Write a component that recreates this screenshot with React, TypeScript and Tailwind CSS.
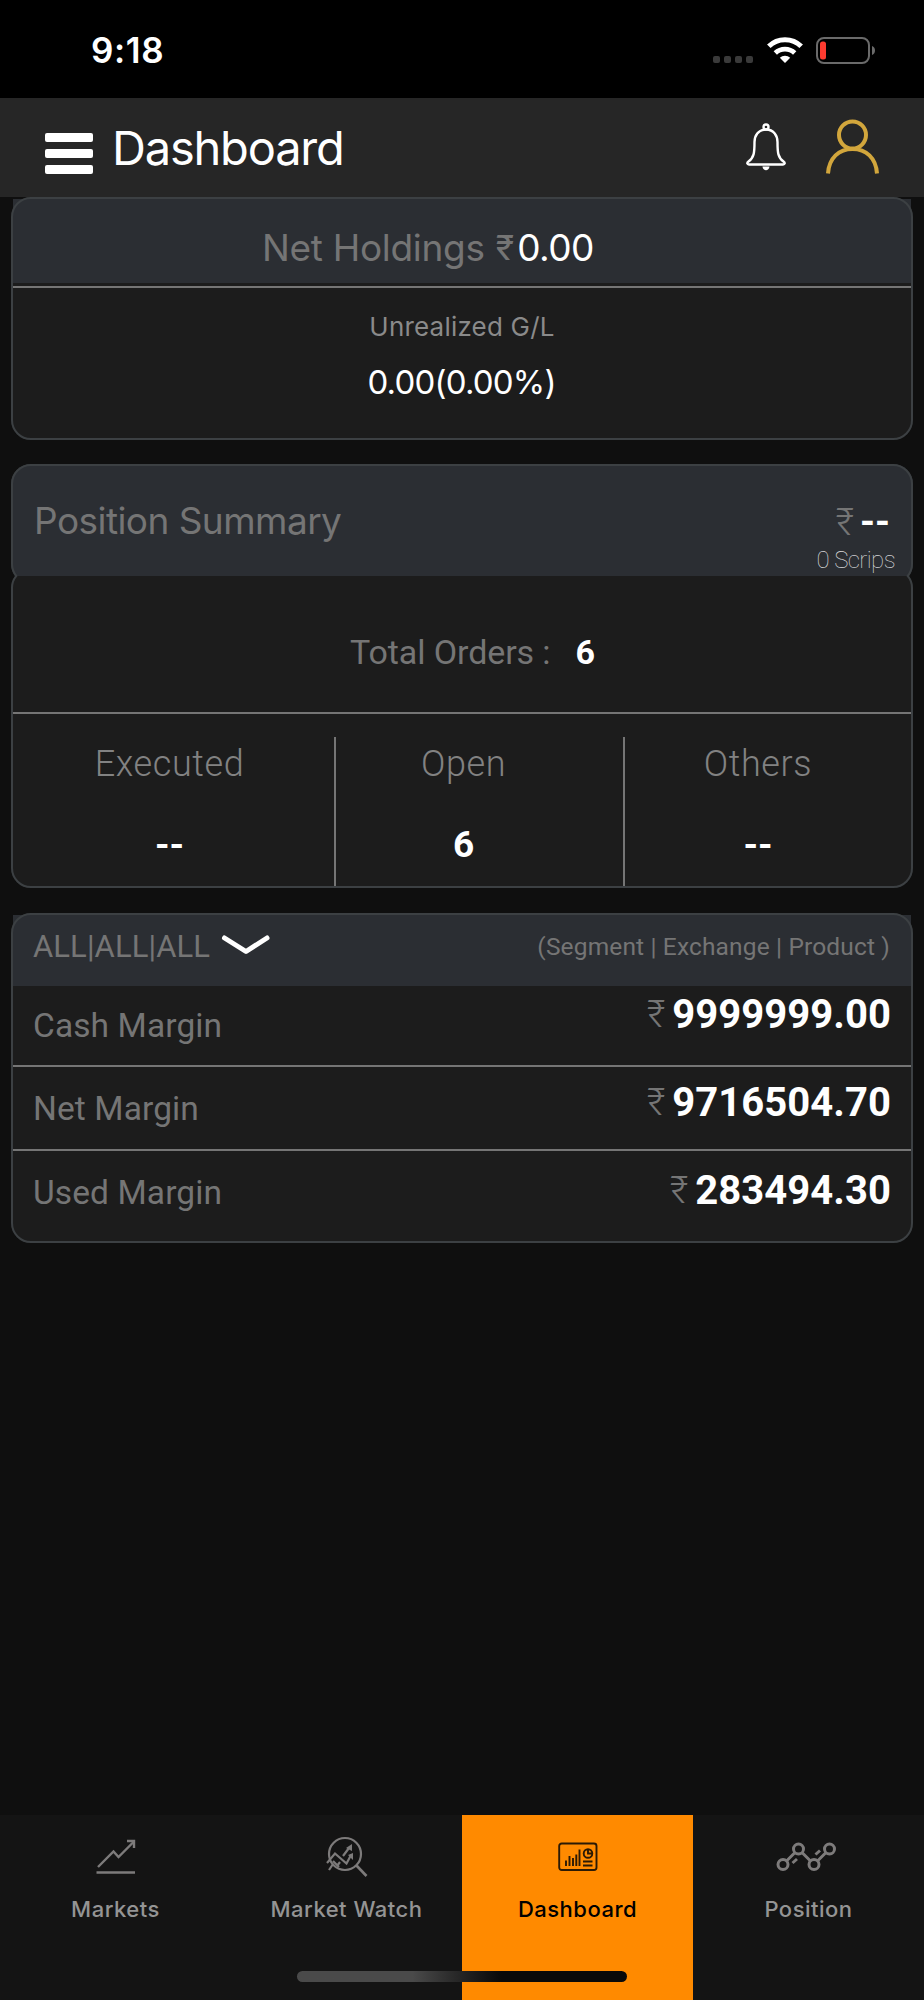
import React from "react";

type MarginRow = {
    label: string;
    amount: string;
};

type OrderStat = {
    label: string;
    value: string;
};

type NavItemType = {
    label: string;
    icon: React.ReactNode;
    active?: boolean;
};

const margins: MarginRow[] = [
    { label: "Cash Margin", amount: "9999999.00" },
    { label: "Net Margin", amount: "9716504.70" },
    { label: "Used Margin", amount: "283494.30" },
];

const MarketsIcon = () => (
    <svg width="40" height="36" viewBox="0 0 40 36" fill="none" stroke="#7d7b7b" strokeWidth="2.400">
        <path d="M2 28 17.5 12.5 22.5 18 37.5 3" />
        <path d="M31 2H38V9" />
        <path d="M0.500 33.500H39" />
    </svg>
);

const MarketWatchIcon = () => (
    <svg width="42" height="42" viewBox="0 0 42 42" fill="none" stroke="#7d7b7b" strokeWidth="2.200">
        <circle cx="19" cy="18" r="16" />
        <path d="M30 29 40.500 40" strokeWidth="2.600" />
        <path d="M1 27 9 17.500 20.500 27.500 24.500 20" />
        <path d="M3 34 7 28M7 25 13 31M11 30 14 26M17 20 23 12" />
        <path d="M20 12 26 8V15ZM22 19 27 17 27 24Z" fill="#7d7b7b" stroke="none" />
    </svg>
);

const DashboardIcon = () => (
    <svg width="40" height="30" viewBox="0 0 40 30" fill="none" stroke="#2b1a05" strokeWidth="1.900">
        <rect x="1.200" y="1.500" width="37.300" height="26.500" rx="2.500" />
        <path d="M8 18.500V24M11.500 14V24M15 16V24M18.300 12.500V24M21.500 7.500V24" />
        <circle cx="30" cy="11.500" r="4.300" />
        <path d="M30 7V11.500H34.500M25 19.500H34.500M25 23.500H34.500" />
    </svg>
);

const PositionIcon = () => (
    <svg className="mr-[5px]" width="60" height="30" viewBox="0 0 60 30" fill="none" stroke="#7d7b7b" strokeWidth="3">
        <circle cx="7" cy="22.500" r="5" />
        <circle cx="22.500" cy="7" r="5" />
        <circle cx="38" cy="22.500" r="5" />
        <circle cx="53.500" cy="7" r="5" />
        <path d="M10.500 19 19 10.500M26 10.500 34.500 19M41.500 19 50 10.500" />
        <path d="M16.500 21 21 17M39.500 12.500 44 8.500" />
    </svg>
);

const navItems: NavItemType[] = [
    { label: "Markets", icon: <MarketsIcon /> },
    { label: "Market Watch", icon: <MarketWatchIcon /> },
    { label: "Dashboard", icon: <DashboardIcon />, active: true },
    { label: "Position", icon: <PositionIcon /> },
];

const StatusBar = () => (
    <div className="h-[98px] bg-black flex justify-between items-start pl-[91px] pr-[48px]">
        <p className="pt-[33px] text-[35px] leading-none font-semibold tracking-[0.6px] text-white">9:18</p>
        <div className="flex items-start pt-[36px]">
            <div className="flex gap-[4px] mt-[20px] mr-[14px]">
                <span className="w-[7px] h-[7px] rounded-[2px] bg-[#3a3a3a]" />
                <span className="w-[7px] h-[7px] rounded-[2px] bg-[#3a3a3a]" />
                <span className="w-[7px] h-[7px] rounded-[2px] bg-[#3a3a3a]" />
                <span className="w-[7px] h-[7px] rounded-[2px] bg-[#3a3a3a]" />
            </div>
            <svg width="36" height="27" viewBox="0 0 36 27" fill="none" stroke="#fff">
                <path d="M1.800 10.300A23 23 0 0 1 34.200 10.300" strokeWidth="5" />
                <path d="M8.300 17A14 14 0 0 1 27.700 17" strokeWidth="4.800" />
                <path d="M18 27 12.800 21.800A7.500 7.500 0 0 1 23.200 21.800Z" fill="#fff" stroke="none" />
            </svg>
            <svg className="ml-[13px]" width="60" height="29" viewBox="0 0 60 29" fill="none">
                <rect x="1" y="2" width="52" height="25" rx="7" stroke="#6a6a6a" strokeWidth="2" />
                <rect x="4" y="5.500" width="6" height="18" rx="2.500" fill="#fe3b30" />
                <path d="M56 10C60 11.500 60 17.500 56 19Z" fill="#6a6a6a" />
            </svg>
        </div>
    </div>
);

const Header = () => (
    <div className="h-[99px] bg-[#262626] flex items-start pl-[45px] pr-[44px]">
        <button className="mt-[35px] flex flex-col gap-[7px]">
            <span className="block w-[48px] h-[9px] rounded-[2px] bg-white" />
            <span className="block w-[48px] h-[9px] rounded-[2px] bg-white" />
            <span className="block w-[48px] h-[9px] rounded-[2px] bg-white" />
        </button>
        <h1 className="mt-[26px] ml-[19px] text-[47px] leading-none tracking-[-1.2px] text-white">Dashboard</h1>
        <div className="ml-auto flex items-start">
            <svg className="mt-[25px]" width="42" height="49" viewBox="0 0 42 49" fill="none" stroke="#fff" strokeWidth="2.400">
                <circle cx="21" cy="4" r="2.500" />
                <path d="M21 6.500C13 6.500 9.500 13 9.500 19C9.500 30 9 34.500 3.500 38.500C1.500 40 2.200 41.500 4 41.500H38C39.800 41.500 40.500 40 38.500 38.500C33 34.500 32.500 30 32.500 19C32.500 13 29 6.500 21 6.500Z" />
                <path d="M17.500 43.500H24.500C24 48.500 18 48.500 17.500 43.500Z" fill="#fff" stroke="none" />
            </svg>
            <svg className="mt-[21px] ml-[37px]" width="56" height="56" viewBox="0 0 56 56" fill="none" stroke="#d2a63c" strokeWidth="4">
                <circle cx="28.500" cy="16" r="13.500" />
                <path d="M4 54.500C5 39 15 30 28.500 30C42 30 52 39 53 54.500" />
            </svg>
        </div>
    </div>
);

// the outline is painted over the square-cornered card header
const Card: React.FC<{ className: string; children: React.ReactNode }> = (props) => (
    <div
        className={`relative rounded-[20px] bg-[#1c1c1c] after:absolute after:inset-0 after:rounded-[20px] after:border-2 after:border-[#3c4043] after:pointer-events-none ${props.className}`}
    >
        {props.children}
    </div>
);

const HoldingsCard = () => (
    <Card className="h-[243px] p-[2px]">
        <div className="h-[84px] bg-[#2b2e33] flex pt-[30px] pl-[249px] text-[37px] leading-none">
            <span className="text-[#757575] whitespace-pre tracking-[-0.3px]">Net Holdings </span>
            <span className="ml-[1px] text-[#757575] text-[34px] leading-[38px]">₹</span>
            <span className="ml-[3px] text-white tracking-[-0.6px]">0.00</span>
        </div>
        <div className="mt-[3px] h-[2px] bg-[#757575]" />
        <div className="flex flex-col items-center">
            <p className="mt-[26px] text-[26px] leading-none tracking-[0.2px] text-[#8a8a8a]">Unrealized G/L</p>
            <p className="mt-[26px] mr-[1px] text-[33px] leading-none tracking-[-0.8px] text-white">0.00(0.00%)</p>
        </div>
    </Card>
);

const OrderColumn: React.FC<{ stat: OrderStat; className: string }> = ({ stat, className }) => (
    <div className={`flex flex-col items-center text-center ${className}`}>
        <p className="mt-[9px] text-[36px] leading-none font-light tracking-[0.6px] text-[#828282]">{stat.label}</p>
        <p className="mt-[44px] text-[37px] leading-none font-bold text-white">{stat.value}</p>
    </div>
);

const PositionCard = () => (
    <div>
        <div className="h-[112px] overflow-hidden">
            <Card className="h-[120px] bg-[#2b2e33]! flex justify-between">
                <p className="mt-[38px] ml-[23px] text-[37px] leading-none tracking-[-0.55px] text-[#757575]">Position Summary</p>
                <div className="flex flex-col items-end font-[Roboto]">
                    <p className="mt-[39px] mr-[23px] flex gap-[6px] text-[38px] leading-none">
                        <span className="font-light text-[#757575]">₹</span>
                        <span className="font-bold text-white">--</span>
                    </p>
                    <p className="mt-[7px] mr-[18px] text-[24px] leading-none font-thin tracking-[-0.6px] text-[#d8d9db]">0 Scrips</p>
                </div>
            </Card>
        </div>
        <div className="h-[312px] overflow-hidden font-[Roboto]">
            <Card className="-mt-[8px] h-[320px] px-[2px] pt-[67px]">
                <div className="flex pl-[337px] text-[34px] leading-none">
                    <span className="tracking-[-0.1px] text-[#757575]">Total Orders :</span>
                    <span className="ml-[25px] font-bold text-white">6</span>
                </div>
                <div className="mt-[43px] h-[2px] bg-[#757575]" />
                <div className="mt-[23px] h-[150px] flex">
                    <OrderColumn stat={{ label: "Executed", value: "--" }} className="w-[321px] pr-[8px]" />
                    <div className="w-[2px] h-[149px] bg-[#757575]" />
                    <OrderColumn stat={{ label: "Open", value: "6" }} className="w-[287px] pr-[32px]" />
                    <div className="w-[2px] h-[149px] bg-[#757575]" />
                    <OrderColumn stat={{ label: "Others", value: "--" }} className="flex-1 pr-[20px]" />
                </div>
            </Card>
        </div>
    </div>
);

const MarginCard = () => (
    <Card className="h-[330px] p-[2px] font-[Roboto]">
        <div className="h-[71px] bg-[#2b2e33] flex justify-between pl-[20px] pr-[21px] text-[#757575]">
            <div className="flex">
                <span className="mt-[16px] text-[31px] leading-none tracking-[0.1px]">ALL|ALL|ALL</span>
                <svg className="mt-[19px] ml-[11px]" width="50" height="22" viewBox="0 0 50 22" fill="none" stroke="#fff" strokeWidth="5" strokeLinecap="round" strokeLinejoin="round">
                    <path d="M3.500 4 25 17.500 46 4" />
                </svg>
            </div>
            <span className="mt-[20px] text-[24.5px] leading-none tracking-[0.15px]">(Segment | Exchange | Product )</span>
        </div>
        {margins.map((row, index) => (
            <div key={index}>
                <div className={`flex justify-between pl-[20px] pr-[20px] ${index === 0 ? "h-[79px]" : "h-[82px]"}`}>
                    <p className={`text-[33.5px] leading-none tracking-[0.1px] text-[#757575] ${index === 0 ? "mt-[23px]" : "mt-[25px]"}`}>
                        {row.label}
                    </p>
                    <p className={`flex gap-[7px] text-[40px] leading-none tracking-[0.05px] ${index === 0 ? "mt-[9px]" : index === 1 ? "mt-[16px]" : "mt-[20px]"}`}>
                        <span className="font-light text-[38px] text-[#757575]">₹</span>
                        <span className="font-bold text-white">{row.amount}</span>
                    </p>
                </div>
                {index < margins.length - 1 && <div className="h-[2px] bg-[#757575]" />}
            </div>
        ))}
    </Card>
);

const BottomNav = () => (
    <div className="relative h-[185px] bg-[#141414] flex">
        {navItems.map((item, index) => (
            <div key={index} className={`w-[231px] flex flex-col items-center ${item.active ? "bg-[#ff8a00] text-black" : "text-[#949494]"}`}>
                <div className="h-[83px] pt-[21px] flex items-center pb-[20px]">{item.icon}</div>
                <p className="text-[22px] leading-none font-medium tracking-[0.5px]">{item.label}</p>
            </div>
        ))}
        {/* home indicator */}
        <div className="absolute left-[297px] top-[156px] w-[330px] h-[11px] rounded-full bg-linear-to-r from-[#4a4a4a] from-35% to-[#090909] to-62%" />
    </div>
);

const App = () => {
    return (
        <div className="w-[924px] h-[2000px] bg-[#0f0f0f] flex flex-col font-['Inter',sans-serif] overflow-hidden">
            <StatusBar />
            <Header />
            <div className="flex-1 px-[11px] flex flex-col">
                <HoldingsCard />
                <div className="mt-[24px]">
                    <PositionCard />
                </div>
                <div className="mt-[25px]">
                    <MarginCard />
                </div>
            </div>
            <BottomNav />
        </div>
    );
};

export default App;
